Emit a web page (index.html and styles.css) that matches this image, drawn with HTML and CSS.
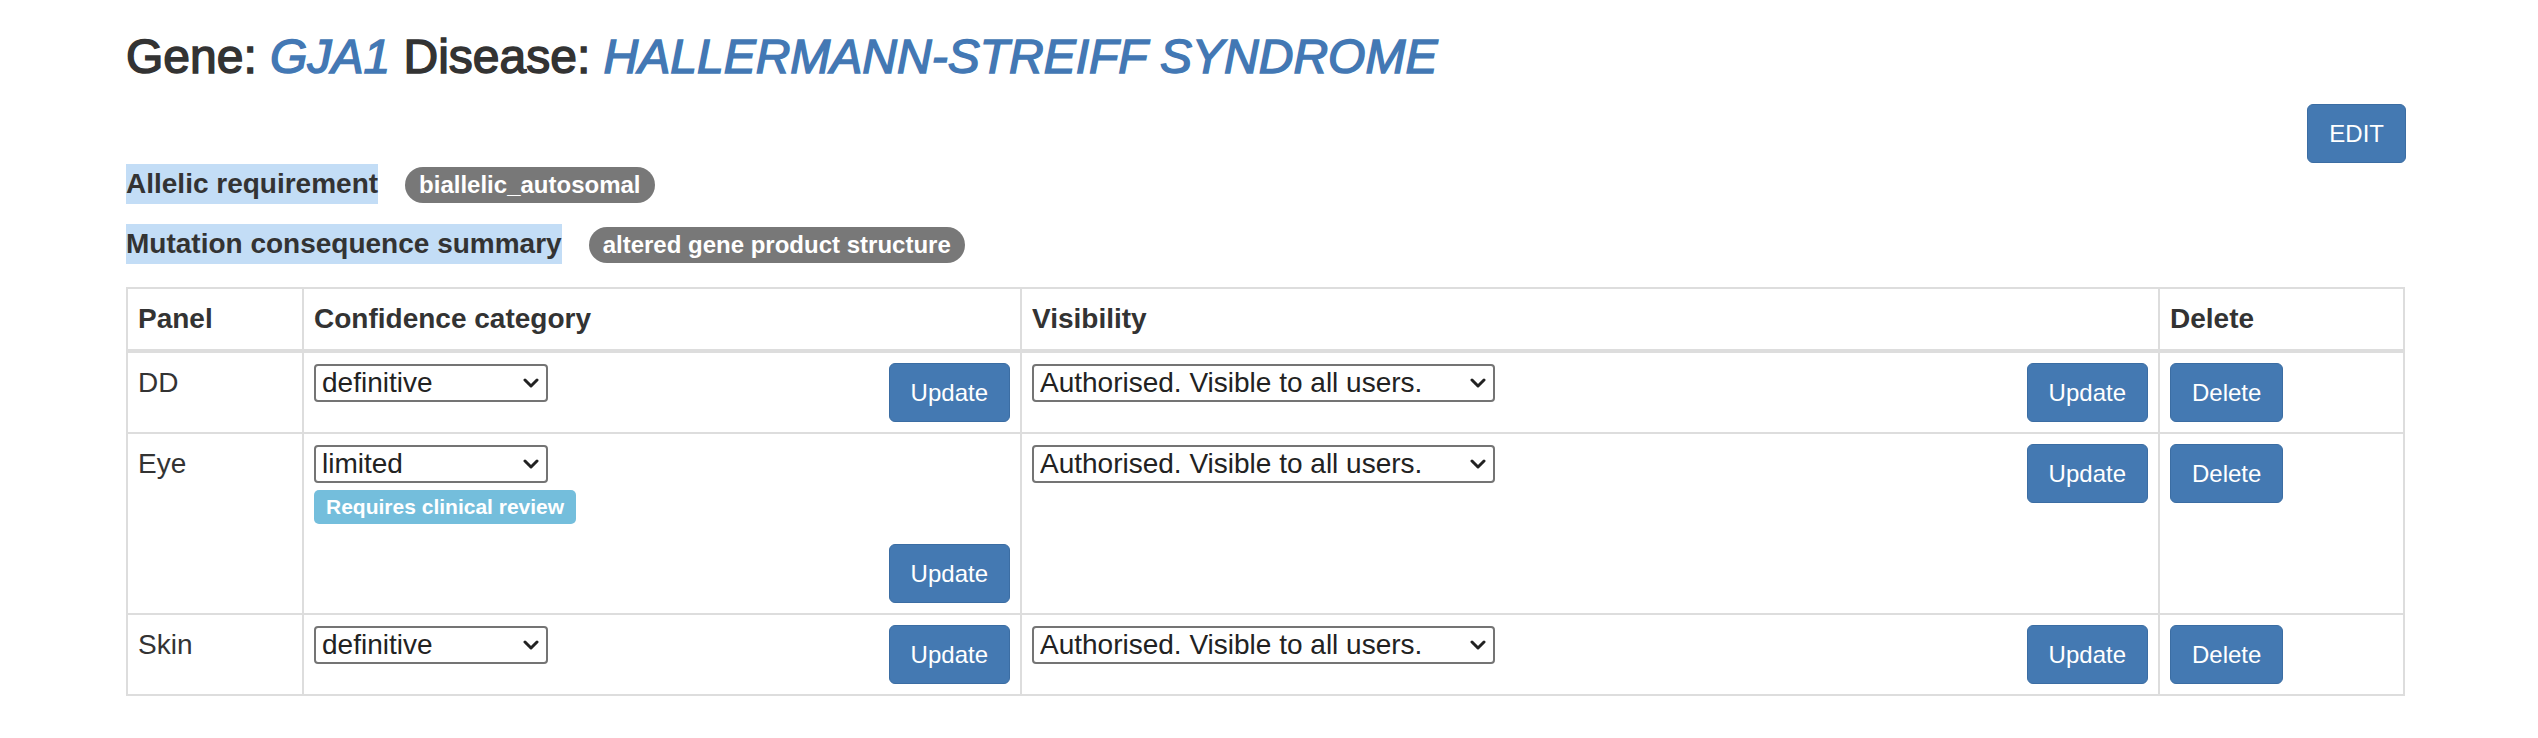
FILE: index.html
```html
<!DOCTYPE html>
<html>
<head>
<meta charset="utf-8">
<title>GJA1 - HALLERMANN-STREIFF SYNDROME</title>
<link rel="stylesheet" href="styles.css">
</head>
<body>
<div class="container">
  <h3 class="title">Gene: <a class="link">GJA1</a> Disease: <a class="link">HALLERMANN-STREIFF SYNDROME</a></h3>
  <div class="edit-row"><button class="btn">EDIT</button></div>
  <div class="info-row"><strong class="hl">Allelic requirement</strong><span class="badge">biallelic_autosomal</span></div>
  <div class="info-row info-row-2"><strong class="hl">Mutation consequence summary</strong><span class="badge">altered gene product structure</span></div>

  <table class="panels">
    <colgroup>
      <col class="c-panel"><col class="c-conf"><col class="c-vis"><col class="c-del">
    </colgroup>
    <thead>
      <tr><th>Panel</th><th>Confidence category</th><th>Visibility</th><th>Delete</th></tr>
    </thead>
    <tbody>
      <tr>
        <td>DD</td>
        <td>
          <div class="split">
            <div class="sel sel-conf"><select><option>definitive</option></select><svg class="chev" viewBox="0 0 16 12"><polyline points="2,3 8,9 14,3"/></svg></div>
            <button class="btn">Update</button>
          </div>
        </td>
        <td>
          <div class="split">
            <div class="sel sel-vis"><select><option>Authorised. Visible to all users.</option></select><svg class="chev" viewBox="0 0 16 12"><polyline points="2,3 8,9 14,3"/></svg></div>
            <button class="btn">Update</button>
          </div>
        </td>
        <td><button class="btn">Delete</button></td>
      </tr>
      <tr>
        <td>Eye</td>
        <td>
          <div class="stack">
            <div class="sel sel-conf"><select><option>limited</option></select><svg class="chev" viewBox="0 0 16 12"><polyline points="2,3 8,9 14,3"/></svg></div>
            <span class="label-info">Requires clinical review</span>
            <button class="btn btn-end">Update</button>
          </div>
        </td>
        <td>
          <div class="split">
            <div class="sel sel-vis"><select><option>Authorised. Visible to all users.</option></select><svg class="chev" viewBox="0 0 16 12"><polyline points="2,3 8,9 14,3"/></svg></div>
            <button class="btn">Update</button>
          </div>
        </td>
        <td><button class="btn">Delete</button></td>
      </tr>
      <tr>
        <td>Skin</td>
        <td>
          <div class="split">
            <div class="sel sel-conf"><select><option>definitive</option></select><svg class="chev" viewBox="0 0 16 12"><polyline points="2,3 8,9 14,3"/></svg></div>
            <button class="btn">Update</button>
          </div>
        </td>
        <td>
          <div class="split">
            <div class="sel sel-vis"><select><option>Authorised. Visible to all users.</option></select><svg class="chev" viewBox="0 0 16 12"><polyline points="2,3 8,9 14,3"/></svg></div>
            <button class="btn">Update</button>
          </div>
        </td>
        <td><button class="btn">Delete</button></td>
      </tr>
    </tbody>
  </table>
</div>
</body>
</html>
```

FILE: styles.css
```css
html, body {
  margin: 0;
  padding: 0;
  background: #fff;
}
body {
  font-family: "Liberation Sans", Arial, Helvetica, sans-serif;
  font-size: 28px;
  line-height: 40px;
  color: #333;
}
.container {
  padding-left: 126px;
  width: 2279px;
}
.title {
  margin: 31px 0 20px;
  font-size: 48px;
  line-height: 52.8px;
  font-weight: 400;
  color: #333;
  -webkit-text-stroke: 1.5px currentColor;
}
.link {
  color: #4378b4;
  font-style: italic;
  text-decoration: none;
}
.edit-row {
  display: flex;
  justify-content: flex-end;
  margin-right: -1px;
}
.btn {
  font-family: "Liberation Sans", Arial, Helvetica, sans-serif;
  font-size: 24px;
  line-height: 37px;
  padding: 10px 21px;
  color: #fff;
  background: #4479b2;
  border: 1px solid #3b6da3;
  border-radius: 6px;
  cursor: pointer;
}
.info-row {
  display: flex;
  align-items: center;
  margin-top: 1px;
  margin-bottom: 20px;
}
.info-row-2 {
  margin-top: 0;
  margin-bottom: 0;
}
.hl {
  background: #c3ddf6;
  color: #333;
  font-weight: 700;
  line-height: 40px;
}
.badge {
  margin-left: 27px;
  margin-top: 3px;
  background: #787878;
  color: #fff;
  font-size: 24px;
  font-weight: 700;
  line-height: 24px;
  padding: 6px 14px;
  border-radius: 20px;
}
.panels {
  margin-top: 23px;
  width: 2279px;
  border-collapse: collapse;
  border: 2px solid #ddd;
  table-layout: fixed;
}
.c-panel { width: 176px; }
.c-conf { width: 718px; }
.c-vis { width: 1138px; }
.c-del { width: 245px; }
.panels th,
.panels td {
  border: 2px solid #ddd;
  padding: 10px;
  text-align: left;
  vertical-align: top;
}
.panels th {
  font-weight: 700;
  border-bottom-width: 4px;
}
.split {
  display: flex;
  justify-content: space-between;
  align-items: flex-start;
}
.stack {
  display: flex;
  flex-direction: column;
  align-items: flex-start;
}
.btn-end {
  align-self: flex-end;
  margin-top: 20px;
}
.sel {
  position: relative;
  display: inline-block;
  margin-top: 1px;
}
.sel select {
  -webkit-appearance: none;
  appearance: none;
  display: block;
  height: 38px;
  margin: 0;
  padding: 0 30px 0 6px;
  font-family: "Liberation Sans", Arial, Helvetica, sans-serif;
  font-size: 28px;
  color: #222;
  background: #fff;
  border: 2px solid #747474;
  border-radius: 4px;
}
.sel-conf select { width: 234px; }
.sel-vis select { width: 463px; }
.chev {
  position: absolute;
  right: 9px;
  top: 13px;
  width: 16px;
  height: 12px;
  pointer-events: none;
}
.chev polyline {
  fill: none;
  stroke: #222;
  stroke-width: 3;
  stroke-linecap: round;
  stroke-linejoin: round;
}
.label-info {
  margin-top: 7px;
  background: #74bedc;
  color: #fff;
  font-size: 21px;
  font-weight: 700;
  line-height: 21px;
  padding: 6px 12px 7px;
  border-radius: 5px;
}
```
